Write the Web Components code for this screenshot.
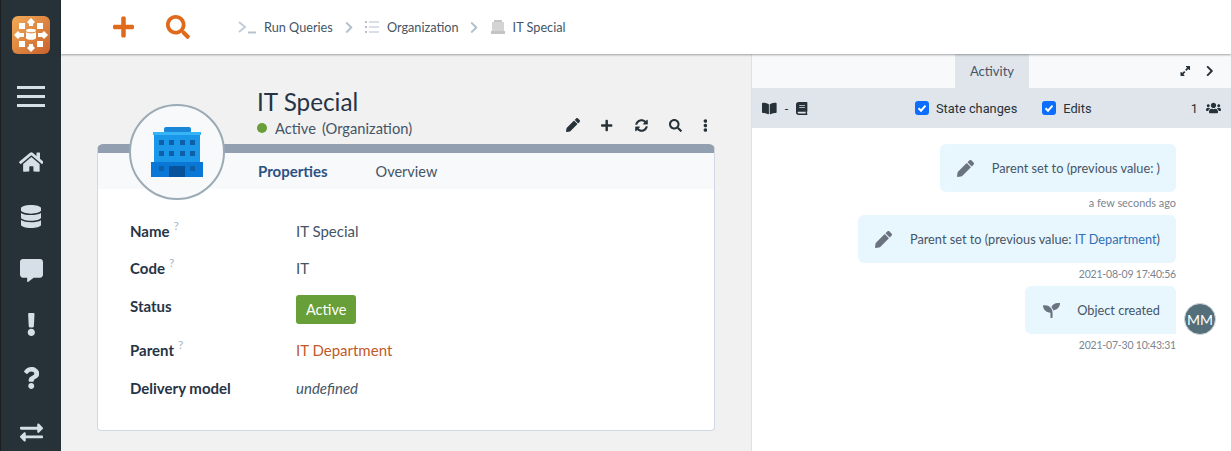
<!DOCTYPE html>
<html>
<head>
<meta charset="utf-8">
<title>IT Special</title>
<style>
  html, body { margin: 0; height: 100%; overflow: hidden; }
  body { font-family: "Lato", "Liberation Sans", sans-serif; color: #263238; background: #fff; }
</style>
</head>
<body>
<app-shell>
  <side-nav slot="nav"></side-nav>
  <top-bar slot="top"></top-bar>

  <div slot="main">
    <object-card heading="IT Special" status="Active" kind="(Organization)">
      <prop-row label="Name" hint short>IT Special</prop-row>
      <prop-row label="Code" hint>IT</prop-row>
      <prop-row label="Status" tall><status-badge>Active</status-badge></prop-row>
      <prop-row label="Parent" hint><span style="color:#bf5a2b">IT Department</span></prop-row>
      <prop-row label="Delivery model"><em>undefined</em></prop-row>
    </object-card>
  </div>

  <activity-panel slot="side">
    <activity-item icon="pencil" time="a few seconds ago">Parent set to (previous value: )</activity-item>
    <activity-item icon="pencil" time="2021-08-09 17:40:56">Parent set to (previous value: <span style="color:#2f6fb5">IT Department</span>)</activity-item>
    <activity-item icon="seedling" time="2021-07-30 10:43:31" author="MM">Object created</activity-item>
  </activity-panel>
</app-shell>

<script>
const ICONS = {
  plus: ['0 0 448 512', 'M416 208H272V64c0-17.67-14.33-32-32-32h-32c-17.67 0-32 14.33-32 32v144H32c-17.67 0-32 14.33-32 32v32c0 17.67 14.33 32 32 32h144v144c0 17.67 14.33 32 32 32h32c17.67 0 32-14.33 32-32V304h144c17.67 0 32-14.33 32-32v-32c0-17.67-14.33-32-32-32z'],
  search: ['0 0 512 512', 'M505 442.7L405.3 343c-4.5-4.5-10.6-7-17-7H372c27.6-35.3 44-79.7 44-128C416 93.1 322.9 0 208 0S0 93.1 0 208s93.1 208 208 208c48.3 0 92.7-16.4 128-44v16.3c0 6.4 2.5 12.5 7 17l99.7 99.7c9.4 9.4 24.6 9.4 33.9 0l28.3-28.3c9.4-9.4 9.4-24.6.1-34zM208 336c-70.7 0-128-57.2-128-128 0-70.7 57.2-128 128-128 70.7 0 128 57.2 128 128 0 70.7-57.2 128-128 128z'],
  pencil: ['0 0 512 512', 'M497.9 142.1l-46.1 46.1c-4.7 4.7-12.3 4.7-17 0l-111-111c-4.7-4.7-4.7-12.3 0-17l46.1-46.1c18.7-18.7 49.1-18.7 67.9 0l60.1 60.1c18.8 18.7 18.8 49.1 0 67.9zM284.2 99.8L21.6 362.4.4 483.9c-2.9 16.4 11.4 30.6 27.8 27.8l121.5-21.3 262.6-262.6c4.7-4.7 4.7-12.3 0-17l-111-111c-4.8-4.7-12.4-4.7-17.1 0z'],
  home: ['0 0 576 512', 'M280.37 148.26L96 300.11V464a16 16 0 0 0 16 16l112.06-.29a16 16 0 0 0 15.92-16V368a16 16 0 0 1 16-16h64a16 16 0 0 1 16 16v95.64a16 16 0 0 0 16 16.05L464 480a16 16 0 0 0 16-16V300L295.67 148.26a12.19 12.19 0 0 0-15.3 0zM571.6 251.47L488 182.56V44.05a12 12 0 0 0-12-12h-56a12 12 0 0 0-12 12v72.61L318.47 43a48 48 0 0 0-61 0L4.34 251.47a12 12 0 0 0-1.6 16.9l25.5 31A12 12 0 0 0 45.15 301l235.22-193.74a12.19 12.19 0 0 1 15.3 0L530.9 301a12 12 0 0 0 16.9-1.6l25.5-31a12 12 0 0 0-1.7-16.93z'],
  database: ['0 0 448 512', 'M448 73.143v45.714C448 159.143 347.667 192 224 192S0 159.143 0 118.857V73.143C0 32.857 100.333 0 224 0s224 32.857 224 73.143zM448 176v102.857C448 319.143 347.667 352 224 352S0 319.143 0 278.857V176c48.125 33.143 136.208 48.572 224 48.572S399.874 209.143 448 176zm0 160v102.857C448 479.143 347.667 512 224 512S0 479.143 0 438.857V336c48.125 33.143 136.208 48.572 224 48.572S399.874 369.143 448 336z'],
  comment: ['0 0 512 512', 'M448 0H64C28.7 0 0 28.7 0 64v288c0 35.3 28.7 64 64 64h96v84c0 9.8 11.2 15.5 19.1 9.7L304 416h144c35.3 0 64-28.7 64-64V64c0-35.3-28.7-64-64-64z'],
  exclamation: ['0 0 192 512', 'M176 432c0 44.112-35.888 80-80 80s-80-35.888-80-80 35.888-80 80-80 80 35.888 80 80zM25.26 25.199l13.6 272C39.499 309.972 50.041 320 62.83 320h66.34c12.789 0 23.331-10.028 23.97-22.801l13.6-272C167.425 11.49 156.496 0 142.77 0H49.23C35.504 0 24.575 11.49 25.26 25.199z'],
  question: ['0 0 384 512', 'M202.021 0C122.202 0 70.503 32.703 29.914 91.026c-7.363 10.58-5.093 25.086 5.178 32.874l43.138 32.709c10.373 7.865 25.132 6.026 33.253-4.148 25.049-31.381 43.63-49.449 82.757-49.449 30.764 0 68.816 19.799 68.816 49.631 0 22.552-18.617 34.134-48.993 51.164-35.423 19.86-82.299 44.576-82.299 106.405V320c0 13.255 10.745 24 24 24h72.471c13.255 0 24-10.745 24-24v-5.773c0-42.86 125.268-44.645 125.268-160.627C377.504 66.256 286.902 0 202.021 0zM192 373.459c-38.196 0-69.271 31.075-69.271 69.271 0 38.195 31.075 69.27 69.271 69.27s69.271-31.075 69.271-69.271-31.075-69.27-69.271-69.27z'],
  exchange: ['0 0 512 512', 'M0 168v-16c0-13.255 10.745-24 24-24h360V80c0-21.367 25.899-32.042 40.971-16.971l80 80c9.372 9.373 9.372 24.569 0 33.941l-80 80C409.956 272.982 384 262.456 384 240v-48H24c-13.255 0-24-10.745-24-24zm488 152H128v-48c0-21.314-25.862-32.08-40.971-16.971l-80 80c-9.372 9.373-9.372 24.569 0 33.941l80 80C102.057 463.997 128 453.437 128 432v-48h360c13.255 0 24-10.745 24-24v-16c0-13.255-10.745-24-24-24z'],
  sync: ['0 0 512 512', 'M370.72 133.28C339.458 104.008 298.888 87.962 255.848 88c-77.458.068-144.328 53.178-162.791 126.85-1.344 5.363-6.122 9.15-11.651 9.15H24.103c-7.498 0-13.194-6.807-11.807-14.176C33.933 94.924 134.813 8 256 8c66.448 0 126.791 26.136 171.315 68.685L463.03 40.97C478.149 25.851 504 36.559 504 57.941V192c0 13.255-10.745 24-24 24H345.941c-21.382 0-32.09-25.851-16.971-40.971l41.75-41.749zM32 296h134.059c21.382 0 32.09 25.851 16.971 40.971l-41.75 41.75c31.262 29.273 71.835 45.319 114.876 45.28 77.418-.07 144.315-53.144 162.787-126.849 1.344-5.363 6.122-9.15 11.651-9.15h57.304c7.498 0 13.194 6.807 11.807 14.176C478.067 417.076 377.187 504 256 504c-66.448 0-126.791-26.136-171.315-68.685L48.97 471.03C33.851 486.149 8 475.441 8 454.059V320c0-13.255 10.745-24 24-24z'],
  dots: ['0 0 192 512', 'M96 184c39.8 0 72 32.2 72 72s-32.2 72-72 72-72-32.2-72-72 32.2-72 72-72zM24 80c0 39.8 32.2 72 72 72s72-32.2 72-72S135.8 8 96 8 24 40.2 24 80zm0 352c0 39.8 32.2 72 72 72s72-32.2 72-72-32.2-72-72-72-72 32.2-72 72z'],
  chevron: ['0 0 320 512', 'M285.476 272.971L91.132 467.314c-9.373 9.373-24.569 9.373-33.941 0l-22.667-22.667c-9.357-9.357-9.375-24.522-.04-33.901L188.505 256 34.484 101.255c-9.335-9.379-9.317-24.544.04-33.901l22.667-22.667c9.373-9.373 24.569-9.373 33.941 0L285.475 239.03c9.373 9.372 9.373 24.568.001 33.941z'],
  bookopen: ['0 0 576 512', 'M542.22 32.05c-54.8 3.11-163.72 14.43-230.96 55.59-4.64 2.84-7.27 7.89-7.27 13.17v363.87c0 11.55 12.63 18.85 23.28 13.49 69.18-34.82 169.23-44.32 218.7-46.92 16.89-.89 30.02-14.43 30.02-30.66V62.75c.01-17.71-15.35-31.74-33.77-30.7zM264.73 87.64C197.5 46.48 88.58 35.17 33.78 32.05 15.36 31.01 0 45.04 0 62.75V400.6c0 16.24 13.13 29.78 30.02 30.66 49.49 2.6 149.59 12.11 218.77 46.95 10.62 5.35 23.21-1.94 23.21-13.46V100.63c0-5.29-2.62-10.14-7.27-12.99z'],
  book: ['0 0 448 512', 'M448 360V24c0-13.3-10.7-24-24-24H96C43 0 0 43 0 96v320c0 53 43 96 96 96h328c13.3 0 24-10.7 24-24v-16c0-7.5-3.5-14.3-8.9-18.7-4.2-15.4-4.2-59.3 0-74.7 5.4-4.3 8.9-11.1 8.9-18.6zM128 134c0-3.3 2.7-6 6-6h212c3.3 0 6 2.7 6 6v20c0 3.3-2.7 6-6 6H134c-3.3 0-6-2.7-6-6v-20zm0 64c0-3.3 2.7-6 6-6h212c3.3 0 6 2.7 6 6v20c0 3.3-2.7 6-6 6H134c-3.3 0-6-2.7-6-6v-20zm253.4 250H96c-17.7 0-32-14.3-32-32 0-17.6 14.4-32 32-32h285.4c-1.9 17.1-1.9 46.9 0 64z'],
  expand: ['0 0 448 512', 'M270 40h138c11 0 20 9 20 20v138c0 18-21 27-34 14l-40-40-82 82-52-52 82-82-40-40c-13-13-4-40 8-40zM178 472H40c-11 0-20-9-20-20V314c0-18 21-27 34-14l40 40 82-82 52 52-82 82 40 40c13 13 4 40-8 40z'],
  users: ['0 0 640 512', 'M96 224c35.3 0 64-28.7 64-64s-28.7-64-64-64-64 28.7-64 64 28.7 64 64 64zm448 0c35.3 0 64-28.7 64-64s-28.7-64-64-64-64 28.7-64 64 28.7 64 64 64zm32 32h-64c-17.6 0-33.5 7.1-45.1 18.6 40.3 22.1 68.9 62 75.1 109.4h66c17.7 0 32-14.3 32-32v-32c0-35.3-28.7-64-64-64zm-256 0c61.9 0 112-50.1 112-112S381.9 32 320 32 208 82.1 208 144s50.1 112 112 112zm76.8 32h-8.3c-20.8 10-43.9 16-68.5 16s-47.6-6-68.5-16h-8.3C179.6 288 128 339.6 128 403.2V432c0 26.5 21.5 48 48 48h288c26.5 0 48-21.5 48-48v-28.8c0-63.6-51.6-115.2-115.2-115.2zm-223.7-13.4C161.5 263.1 145.6 256 128 256H64c-35.3 0-64 28.7-64 64v32c0 17.7 14.3 32 32 32h65.9c6.3-47.4 34.9-87.3 75.2-109.4z'],
  seedling: ['0 0 512 512', 'M64 96H0c0 123.7 100.3 224 224 224v144c0 8.8 7.2 16 16 16h32c8.8 0 16-7.2 16-16V320C288 196.3 187.7 96 64 96zm384-64c-84.2 0-157.4 46.5-195.7 115.2 27.7 30.2 48.2 66.9 59 107.6C424 243.1 512 147.9 512 32h-64z']
};

// small base class so every element only states its css and markup
class ShadowEl extends HTMLElement {
  render(html) {
    this.attachShadow({ mode: 'open' });
    this.shadowRoot.innerHTML = html;
  }
}

class FaIcon extends ShadowEl {
  connectedCallback() {
    const [box, d] = ICONS[this.getAttribute('name')];
    const size = this.getAttribute('size') || 14;
    const w = box.split(' ')[2] / box.split(' ')[3] * size;
    this.render(`
      <style>
        :host { display: inline-flex; align-items: center; justify-content: center; flex: none; }
        svg { display: block; fill: currentColor; }
      </style>
      <svg width="${w}" height="${size}" viewBox="${box}"><path d="${d}"/></svg>`);
  }
}
customElements.define('fa-icon', FaIcon);

class AppShell extends ShadowEl {
  connectedCallback() {
    this.render(`
      <style>
        :host { display: grid; grid-template-columns: 61px 690px 1fr; grid-template-rows: 54px 397px; height: 451px; overflow: hidden; }
        ::slotted([slot=nav]) { grid-row: 1 / 3; }
        ::slotted([slot=top]) { grid-column: 2 / 4; }
        .main { background: #f1f1f1; }
        .side { min-width: 0; }
      </style>
      <slot name="nav"></slot>
      <slot name="top"></slot>
      <div class="main"><slot name="main"></slot></div>
      <div class="side"><slot name="side"></slot></div>`);
  }
}
customElements.define('app-shell', AppShell);

class SideNav extends ShadowEl {
  connectedCallback() {
    this.render(`
      <style>
        :host { display: flex; flex-direction: column; align-items: center; background: #263238; border-left: 1px solid #1c1f22; box-sizing: border-box; color: #d6dfe8; height: 451px; overflow: hidden; padding-top: 16px; }
        .logo { width: 38px; height: 38px; flex: none; border-radius: 6px; background: linear-gradient(135deg, #f2ab58, #c9612a); display: block; }
        .burger { width: 28px; flex: none; margin: 32px 0 28px; display: flex; flex-direction: column; gap: 6px; }
        .burger i { display: block; height: 3px; background: #d6dfe8; }
        .items { display: flex; flex-direction: column; align-items: center; flex: none; }
        .items fa-icon { height: 54px; }
      </style>
      <svg class="logo" viewBox="0 0 38 38" fill="#fff">
        <ellipse cx="19" cy="14.5" rx="5" ry="1.8"/>
        <path d="M14 16v6c0 1 2.2 1.8 5 1.8s5-.8 5-1.8v-6c-1 1-3 1.4-5 1.4s-4-.4-5-1.4z"/>
        <rect x="7" y="7" width="6" height="6"/><rect x="25" y="7" width="6" height="6"/>
        <rect x="7" y="25" width="6" height="6"/><rect x="25" y="25" width="6" height="6"/>
        <path d="M19 2l4 4-2 2v2h-4V8l-2-2zM19 36l4-4-2-2v-2h-4v2l-2 2zM2 19l4-4 2 2h4v4H8l-2 2zM36 19l-4-4-2 2h-4v4h4l2 2z"/>
      </svg>
      <div class="burger"><i></i><i></i><i></i></div>
      <div class="items">
        <fa-icon name="home" size="22"></fa-icon>
        <fa-icon name="database" size="23"></fa-icon>
        <fa-icon name="comment" size="23"></fa-icon>
        <fa-icon name="exclamation" size="23"></fa-icon>
        <fa-icon name="question" size="22"></fa-icon>
        <fa-icon name="exchange" size="23"></fa-icon>
      </div>`);
  }
}
customElements.define('side-nav', SideNav);

class TopBar extends ShadowEl {
  connectedCallback() {
    this.render(`
      <style>
        :host { display: flex; align-items: center; background: #fff; box-shadow: 0 1px 2px rgba(0,0,0,.35); position: relative; z-index: 2; padding-left: 52px; color: #e0691a; }
        .plus { margin-right: 32px; }
        .crumbs { display: flex; align-items: center; margin-left: 48px; font-size: 12.7px; color: #455566; }
        .crumbs fa-icon { color: #b4c0cf; }
        .c { margin-left: 8px; }
        .sep { margin: 0 12px; }
        svg { display: block; }
      </style>
      <fa-icon class="plus" name="plus" size="24"></fa-icon>
      <fa-icon name="search" size="24"></fa-icon>
      <div class="crumbs">
        <svg width="18" height="14" viewBox="0 0 18 14" fill="none" stroke="#c3cdda" stroke-width="2"><path d="M1 2l6 5-6 5"/><path d="M10 12.5h8" stroke="#b9c2cc"/></svg>
        <span class="c">Run Queries</span>
        <fa-icon class="sep" name="chevron" size="13"></fa-icon>
        <svg width="14" height="12" viewBox="0 0 14 12" fill="#b4c0cf"><rect y="0" width="2" height="2"/><rect y="5" width="2" height="2"/><rect y="10" width="2" height="2"/><rect x="4" y=".5" width="10" height="1"/><rect x="4" y="5.5" width="10" height="1"/><rect x="4" y="10.5" width="10" height="1"/></svg>
        <span class="c">Organization</span>
        <fa-icon class="sep" name="chevron" size="13"></fa-icon>
        <svg width="14" height="14" viewBox="0 0 14 14" fill="#d4d4d4"><rect x="3" y="0" width="8" height="2" fill="#c4c4c4"/><rect x="1" y="2" width="12" height="10"/><rect y="11" width="14" height="3" fill="#c4c4c4"/></svg>
        <span class="c">IT Special</span>
      </div>`);
  }
}
customElements.define('top-bar', TopBar);

class ObjectCard extends ShadowEl {
  connectedCallback() {
    const g = n => this.getAttribute(n);
    this.render(`
      <style>
        :host { display: block; padding: 0 36px; position: relative; }
        header { height: 90px; padding-left: 160px; display: flex; justify-content: space-between; box-sizing: border-box; padding-top: 33px; }
        h1 { margin: 0; font-size: 24.3px; font-weight: 400; line-height: 29px; color: #263445; }
        .state { display: flex; align-items: center; font-size: 14.7px; line-height: 20px; color: #455566; margin-top: 2px; }
        .dot { width: 10px; height: 10px; border-radius: 50%; background: #689f38; margin-right: 8px; }
        .kind { margin-left: 6px; }
        .actions { display: flex; align-items: center; height: 14px; margin: 31px -3px 0 0; color: #263238; }
        .actions fa-icon { width: 34px; }
        .actions fa-icon:last-child { width: 26px; }
        .card { height: 287px; box-sizing: border-box; background: #fff; border: 1px solid #cfd8e3; border-top: 9px solid #919fb0; border-radius: 6px 6px 4px 4px; }
        .tabs { height: 36px; background: #f8f9fb; display: flex; align-items: center; padding-left: 160px; font-size: 14.5px; color: #455566; }
        .tabs b { color: #2c5282; margin-right: 48px; font-size: 15px; }
        .rows { padding-top: 32px; }
        .avatar { position: absolute; left: 68px; top: 50px; width: 96px; height: 96px; border-radius: 50%; background: #f8f9fb; border: 2px solid #9aabb5; box-sizing: border-box; display: flex; align-items: center; justify-content: center; }
      </style>
      <header>
        <div>
          <h1>${g('heading')}</h1>
          <div class="state"><span class="dot"></span>${g('status')}<span class="kind">${g('kind')}</span></div>
        </div>
        <div class="actions">
          <fa-icon name="pencil" size="14"></fa-icon>
          <fa-icon name="plus" size="13"></fa-icon>
          <fa-icon name="sync" size="13"></fa-icon>
          <fa-icon name="search" size="13"></fa-icon>
          <fa-icon name="dots" size="13"></fa-icon>
        </div>
      </header>
      <div class="card">
        <div class="tabs"><b>Properties</b><span>Overview</span></div>
        <div class="rows"><slot></slot></div>
      </div>
      <div class="avatar">
        <svg width="52" height="50" viewBox="0 0 52 50">
          <rect x="13" y="0" width="27" height="6" rx="2" fill="#1a86d8"/>
          <rect x="2" y="5" width="48" height="3" fill="#35b5f5"/>
          <rect x="3" y="8" width="46" height="28" fill="#1a97e8"/>
          <rect y="35" width="52" height="15" fill="#0a76d6"/>
          <g fill="#0d5fa8">
            <rect x="8" y="13" width="5" height="5"/><rect x="18" y="13" width="5" height="5"/><rect x="29" y="13" width="5" height="5"/><rect x="39" y="13" width="5" height="5"/>
            <rect x="8" y="24" width="5" height="5"/><rect x="18" y="24" width="5" height="5"/><rect x="29" y="24" width="5" height="5"/><rect x="39" y="24" width="5" height="5"/>
            <rect x="8" y="39" width="5" height="5"/><rect x="39" y="39" width="5" height="5"/>
          </g>
          <rect x="18" y="39" width="16" height="11" fill="#06539b"/>
        </svg>
      </div>`);
  }
}
customElements.define('object-card', ObjectCard);

class PropRow extends ShadowEl {
  connectedCallback() {
    const h = this.hasAttribute('tall') ? 44 : this.hasAttribute('short') ? 37 : 38;
    this.render(`
      <style>
        :host { display: grid; grid-template-columns: 166px 1fr; padding-left: 32px; font-size: 15px; line-height: 20px; color: #455566; height: ${h}px; }
        .label { font-weight: 700; color: #263445; }
        sup { font-size: 12px; font-weight: 400; color: #a9b6c6; line-height: 0; margin-left: 4px; position: relative; top: -1px; }
      </style>
      <div class="label">${this.getAttribute('label')}${this.hasAttribute('hint') ? '<sup>?</sup>' : ''}</div>
      <div><slot></slot></div>`);
  }
}
customElements.define('prop-row', PropRow);

class StatusBadge extends ShadowEl {
  connectedCallback() {
    this.render(`
      <style>
        :host { display: inline-block; background: #689f38; color: #fff; border-radius: 3px; font-size: 14.5px; line-height: 29px; padding: 0 10px; margin-top: -1px; }
      </style><slot></slot>`);
  }
}
customElements.define('status-badge', StatusBadge);

class ActivityPanel extends ShadowEl {
  connectedCallback() {
    this.render(`
      <style>
        :host { display: block; height: 397px; border-left: 1px solid #dde1e6; background: #fff; }
        .tabs { height: 34px; background: #f8f9fb; display: flex; align-items: stretch; padding-left: 203px; box-sizing: border-box; font-size: 13px; color: #455566; }
        .tab { width: 74px; background: #e0e5ec; display: flex; align-items: center; justify-content: center; }
        .tools { margin-left: auto; display: flex; align-items: center; gap: 15px; padding-right: 18px; color: #263238; }
        .bar { height: 40px; background: #e0e5ec; display: flex; align-items: center; padding: 0 10px; font-family: Roboto, sans-serif; font-size: 12.8px; color: #263238; }
        .left { display: flex; align-items: center; gap: 8px; width: 153px; }
        label { display: flex; align-items: center; gap: 7px; margin-right: 25px; }
        .box { width: 14px; height: 14px; background: #0d6efd; border-radius: 3px; display: block; }
        .right { margin-left: auto; display: flex; align-items: center; gap: 8px; }
        .list { display: flex; flex-direction: column; padding-top: 16px; }
      </style>
      <div class="tabs">
        <div class="tab">Activity</div>
        <div class="tools"><fa-icon name="expand" size="12"></fa-icon><fa-icon name="chevron" size="12"></fa-icon></div>
      </div>
      <div class="bar">
        <div class="left"><fa-icon name="bookopen" size="13"></fa-icon><span>-</span><fa-icon name="book" size="13"></fa-icon></div>
        <label><svg class="box" viewBox="0 0 14 14"><path d="M3.5 7.2l2.5 2.5 4.5-5" fill="none" stroke="#fff" stroke-width="2"/></svg>State changes</label>
        <label><svg class="box" viewBox="0 0 14 14"><path d="M3.5 7.2l2.5 2.5 4.5-5" fill="none" stroke="#fff" stroke-width="2"/></svg>Edits</label>
        <div class="right"><span>1</span><fa-icon name="users" size="12"></fa-icon></div>
      </div>
      <div class="list"><slot></slot></div>`);
  }
}
customElements.define('activity-panel', ActivityPanel);

class ActivityItem extends ShadowEl {
  connectedCallback() {
    const author = this.getAttribute('author');
    const time = this.getAttribute('time');
    // the numeric stamps run a little wide in this font
    const stamp = /^\d/.test(time) ? 'font-size:10.5px;letter-spacing:-.2px' : 'font-size:10.9px';
    this.render(`
      <style>
        :host { display: grid; grid-template-columns: 1fr 55px; height: 71px; font-size: 12.75px; color: #455566; }
        .col { display: flex; flex-direction: column; align-items: flex-end; }
        .bubble { height: 48px; box-sizing: border-box; background: #e8f6fe; border-radius: 6px; display: flex; align-items: center; padding: 0 16px 0 17px; }
        .bubble.own { border-bottom-right-radius: 0; }
        .bubble fa-icon { color: #6b7280; width: 18px; margin-right: 17px; }
        .time { line-height: 14px; margin-top: 4px; color: #7a8591; }
        .who { display: flex; align-items: flex-start; padding: 17px 0 0 8px; }
        .mm { width: 32px; height: 32px; border-radius: 50%; background: #546e7a; color: #fff; font-size: 14px; display: flex; align-items: center; justify-content: center; border: 1px solid #cfd8dc; box-sizing: border-box; }
      </style>
      <div class="col">
        <div class="bubble ${author ? 'own' : ''}"><fa-icon name="${this.getAttribute('icon')}" size="17"></fa-icon><span><slot></slot></span></div>
        <div class="time" style="${stamp}">${time}</div>
      </div>
      <div class="who">${author ? `<div class="mm">${author}</div>` : ''}</div>`);
  }
}
customElements.define('activity-item', ActivityItem);
</script>
</body>
</html>
